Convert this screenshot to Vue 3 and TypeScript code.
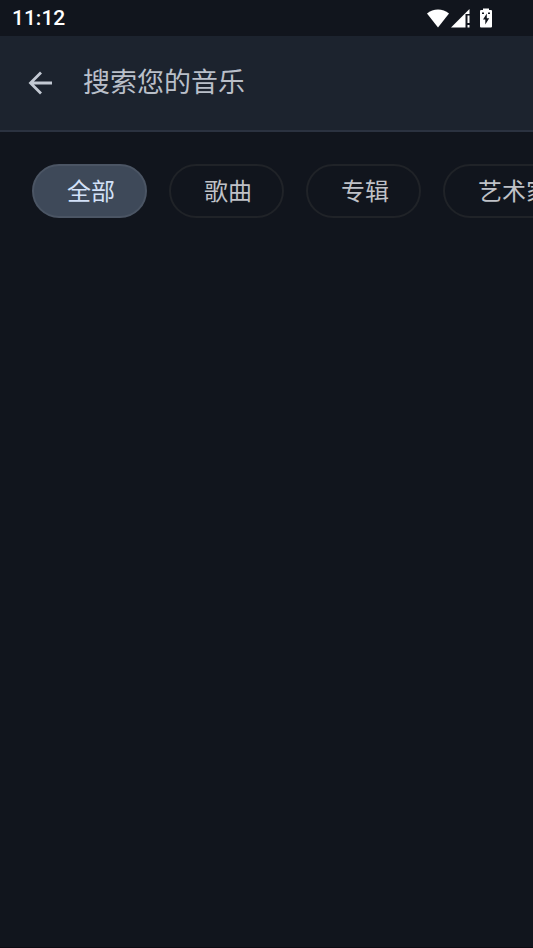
<script setup lang="ts">
import { ref } from 'vue'

const query = ref('')
const filters: string[] = ['全部', '歌曲', '专辑', '艺术家']
const active = ref('全部')
</script>

<template>
  <div class="screen">
    <div class="status">
      <time class="clock">11:12</time>
      <div class="indicators">
        <svg class="wifi" viewBox="0 0 22 19" aria-hidden="true">
          <path d="M0 4.5C6.2-1 15.8-1 22 4.5L11 18.5Z" fill="#fff" />
        </svg>
        <svg class="signal" viewBox="0 0 20 19" aria-hidden="true">
          <path d="M0 18.5L18.5 0V5H14.500V18.5Z" fill="#fff" />
          <path d="M16.500 6.500h2v7.500h-2zM16.500 16h2v2.500h-2z" fill="#fff" />
        </svg>
        <svg class="battery" viewBox="0 0 12 20" aria-hidden="true">
          <path d="M3 2V0.5H9V2H11Q12 2 12 3V18.500Q12 19.500 11 19.500H1Q0 19.500 0 18.500V3Q0 2 1 2Z" fill="#fff" />
          <path d="M6.800 5.500L3 11.600H5.300V16.500L9.200 10.200H6.800Z" fill="#11151c" />
          <path d="M2 4.500h2v1.500h-2zM8 4.500h2v1.500h-2z" fill="#11151c" />
        </svg>
      </div>
    </div>
    <header class="search">
      <button class="back" type="button" aria-label="返回">
        <svg viewBox="0 0 24 24" aria-hidden="true">
          <path d="M24 12H2.500M13 1.500L2.500 12L13 22.500" fill="none" stroke="#c3c9d3" stroke-width="2.800" />
        </svg>
      </button>
      <input v-model="query" class="field" type="text" placeholder="搜索您的音乐" aria-label="搜索您的音乐" />
    </header>
    <nav class="filters">
      <button
        v-for="name in filters"
        :key="name"
        class="chip"
        :class="{ selected: name === active }"
        type="button"
        :aria-pressed="name === active"
        @click="active = name"
      >{{ name }}</button>
    </nav>
  </div>
</template>

<style>
body {
  margin: 0;
  background: #11151d;
}
</style>

<style scoped>
.screen {
  min-height: 100vh;
  box-sizing: border-box;
  overflow: hidden;
  background: #11151d;
  border-bottom: 1px solid #0c0b12;
  font-family: Roboto, "Noto Sans CJK SC", sans-serif;
}
.status {
  display: flex;
  align-items: center;
  justify-content: space-between;
  height: 36px;
  padding: 0 41px 0 12px;
  box-sizing: border-box;
}
.clock {
  color: #fff;
  font-size: 21px;
  font-weight: 500;
  line-height: 38px;
}
.indicators {
  display: flex;
  align-items: center;
}
.wifi {
  width: 22px;
  height: 19px;
}
.signal {
  width: 20px;
  height: 19px;
  margin: 0 9px 0 2px;
}
.battery {
  width: 12px;
  height: 20px;
}
.search {
  display: flex;
  align-items: center;
  gap: 24px;
  height: 96px;
  padding: 0 21px;
  box-sizing: border-box;
  background: #1c232e;
  border-bottom: 2px solid #2b3240;
}
.back {
  display: flex;
  padding: 7px;
  border: 0;
  background: none;
}
.back svg {
  width: 24px;
  height: 24px;
}
.field {
  flex: 1;
  min-width: 0;
  height: 48px;
  padding: 0;
  border: 0;
  outline: 0;
  background: none;
  color: #e2e6ee;
  font: inherit;
  font-size: 27px;
}
.field::placeholder {
  color: #b9bfc9;
  opacity: 1;
}
.filters {
  display: flex;
  gap: 22px;
  padding: 32px;
  overflow: hidden;
}
.chip {
  flex: none;
  height: 54px;
  padding: 1px 30px 0 33px;
  border: 2px solid #202328;
  border-radius: 27px;
  background: none;
  color: #bfc1c7;
  font: inherit;
  font-size: 24px;
  line-height: 48px;
}
.chip.selected {
  border-color: #4b5564;
  background: #3e4959;
  color: #d3e1f8;
}
</style>
